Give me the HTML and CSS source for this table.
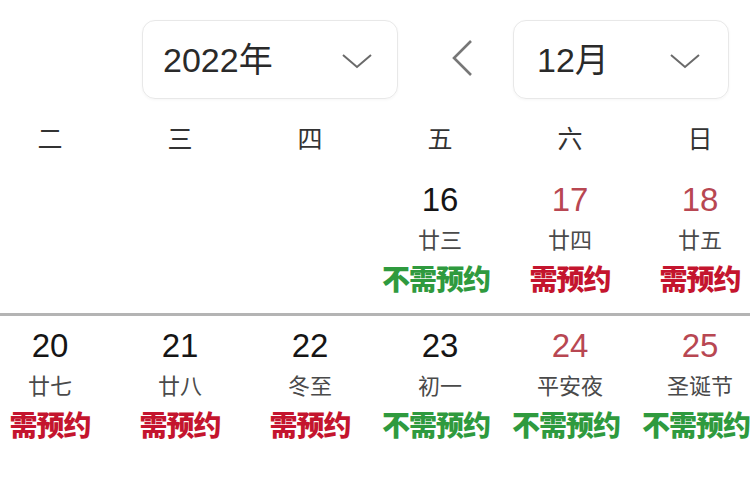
FILE: index.html
```html
<!DOCTYPE html>
<html lang="zh">
<head>
<meta charset="utf-8">
<link rel="stylesheet" href="styles.css">
</head>
<body>
<div class="page">
  <header class="top">
    <div class="select year">
      <span class="sel-text">2022年</span>
      <svg class="chev" width="32" height="16" viewBox="0 0 32 16"><path d="M2 2 L16 14 L30 2" fill="none" stroke="#6a6a6a" stroke-width="2"/></svg>
    </div>
    <div class="prev">
      <svg width="22" height="38" viewBox="0 0 22 38"><path d="M20 2 L3 19 L20 36" fill="none" stroke="#777" stroke-width="2.6"/></svg>
    </div>
    <div class="select month">
      <span class="sel-text">12月</span>
      <svg class="chev" width="32" height="16" viewBox="0 0 32 16"><path d="M2 2 L16 14 L30 2" fill="none" stroke="#6a6a6a" stroke-width="2"/></svg>
    </div>
  </header>

  <div class="grid weekdays">
    <div class="wd">二</div>
    <div class="wd">三</div>
    <div class="wd">四</div>
    <div class="wd">五</div>
    <div class="wd">六</div>
    <div class="wd">日</div>
  </div>

  <div class="grid week first">
    <div class="day"></div>
    <div class="day"></div>
    <div class="day"></div>
    <div class="day"><div class="num">16</div><div class="lunar">廿三</div><div class="status ok">不需预约</div></div>
    <div class="day"><div class="num red">17</div><div class="lunar">廿四</div><div class="status need">需预约</div></div>
    <div class="day"><div class="num red">18</div><div class="lunar">廿五</div><div class="status need">需预约</div></div>
  </div>

  <div class="grid week">
    <div class="day"><div class="num">20</div><div class="lunar">廿七</div><div class="status need">需预约</div></div>
    <div class="day"><div class="num">21</div><div class="lunar">廿八</div><div class="status need">需预约</div></div>
    <div class="day"><div class="num">22</div><div class="lunar">冬至</div><div class="status need">需预约</div></div>
    <div class="day"><div class="num">23</div><div class="lunar">初一</div><div class="status ok">不需预约</div></div>
    <div class="day"><div class="num red">24</div><div class="lunar">平安夜</div><div class="status ok">不需预约</div></div>
    <div class="day"><div class="num red">25</div><div class="lunar">圣诞节</div><div class="status ok">不需预约</div></div>
  </div>
</div>
</body>
</html>
```

FILE: styles.css
```css
html, body {
  margin: 0;
  padding: 0;
  background: #ffffff;
}
body {
  width: 750px;
  height: 500px;
  overflow: hidden;
  font-family: "Noto Sans CJK SC", "Noto Sans", sans-serif;
  color: #222;
}
.page {
  width: 750px;
}
.top {
  display: flex;
  align-items: center;
  padding: 20px 0 0 142px;
  height: 79px;
}
.select {
  box-sizing: border-box;
  height: 79px;
  border: 1px solid #e8e8e8;
  border-radius: 13px;
  display: flex;
  align-items: center;
  justify-content: space-between;
  box-shadow: 0 1px 3px rgba(0,0,0,0.04);
}
.year {
  width: 256px;
  padding: 0 24px 0 20px;
}
.month {
  width: 216px;
  padding: 0 27px 0 23px;
}
.sel-text {
  font-family: "Liberation Sans", "Noto Sans CJK SC", sans-serif;
  font-size: 34px;
  color: #2a2a2a;
  line-height: 1;
}
.chev {
  display: block;
  margin-top: 2px;
}
.prev {
  width: 115px;
  display: flex;
  justify-content: center;
  padding-left: 12px;
  box-sizing: border-box;
  margin-top: -4px;
}
.prev svg { display: block; }

.grid {
  display: grid;
  grid-template-columns: repeat(6, 130px);
  margin-left: -15px;
  width: 780px;
}
.weekdays {
  padding: 18px 0 13px;
}
.wd {
  text-align: center;
  font-size: 25px;
  line-height: 40px;
  color: #333;
}
.week {
  padding: 10px 0 14px;
}
.week.first {
  border-bottom: 3px solid #b4b4b4;
}
.day {
  text-align: center;
}
.num {
  font-family: "Liberation Sans", sans-serif;
  font-size: 33px;
  line-height: 39px;
  color: #151515;
}
.num.red {
  color: #b84752;
}
.lunar {
  font-size: 22px;
  line-height: 38px;
  color: #4a4a4a;
}
.status {
  font-size: 28px;
  font-weight: 900;
  line-height: 42px;
  letter-spacing: -1px;
}
.status.ok {
  color: #2f9a3e;
  padding-right: 8px;
}
.status.need {
  color: #c4152e;
}
```
